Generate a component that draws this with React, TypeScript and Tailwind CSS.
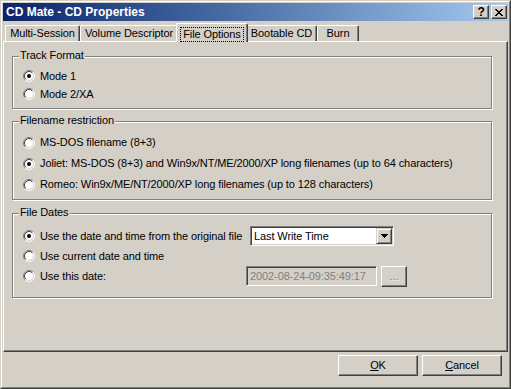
import React from "react";

function Radio({ checked }: { checked?: boolean }) {
  return (
    <svg width="12" height="12" viewBox="0 0 12 12" className="shrink-0">
      <circle cx="6" cy="6" r="5" fill="white" />
      <path d="M2.11 9.89 A5.5 5.5 0 0 1 9.89 2.11" fill="none" stroke="#808080" strokeWidth="1" />
      <path d="M9.89 2.11 A5.5 5.5 0 0 1 2.11 9.89" fill="none" stroke="#ffffff" strokeWidth="1" />
      <path d="M2.82 9.18 A4.5 4.5 0 0 1 9.18 2.82" fill="none" stroke="#404040" strokeWidth="1" />
      <path d="M9.18 2.82 A4.5 4.5 0 0 1 2.82 9.18" fill="none" stroke="#D4D0C8" strokeWidth="1" />
      {checked && <circle cx="6" cy="6" r="2" fill="black" />}
    </svg>
  );
}

function RadioRow({
  checked,
  label,
  h,
  labelW,
  children,
}: {
  checked?: boolean;
  label: string;
  h: string;
  labelW?: string;
  children?: React.ReactNode;
}) {
  return (
    <div className={`flex items-center ${h}`}>
      <Radio checked={checked} />
      <span className={`ml-[5px] whitespace-nowrap ${labelW ?? ""}`}>{label}</span>
      {children}
    </div>
  );
}

function Group({
  title,
  h,
  mt,
  pt,
  children,
}: {
  title: string;
  h: string;
  mt: string;
  pt: string;
  children: React.ReactNode;
}) {
  return (
    <div
      className={`relative ml-[8px] w-[480px] ${h} ${mt} ${pt} pl-[10px] border border-[#808080] shadow-[1px_1px_0_#ffffff,inset_1px_1px_0_#ffffff]`}
    >
      <span className="absolute left-[6px] -top-[8px] px-px bg-[#D4D0C8] leading-[13px]">{title}</span>
      {children}
    </div>
  );
}

function Tab({ label, w }: { label: string; w: string }) {
  return (
    <div
      className={`${w} h-[16px] flex items-center justify-center border-t border-l border-white border-r border-r-[#404040] rounded-tl-[2px] rounded-tr-[2px] shadow-[inset_-1px_0_0_#808080] leading-[13px] whitespace-nowrap`}
    >
      {label}
    </div>
  );
}

function Button({ children }: { children: React.ReactNode }) {
  return (
    <div className="w-[80px] h-[21px] flex items-center justify-center border border-t-white border-l-white border-r-[#404040] border-b-[#404040] shadow-[inset_-1px_-1px_0_#808080] leading-[13px]">
      {children}
    </div>
  );
}

export default function App() {
  return (
    <div className="w-[511px] h-[389px] bg-[#D4D0C8] text-[11px] tracking-[-0.1px] text-black font-['Liberation_Sans',Arial,sans-serif] border border-t-[#D4D0C8] border-l-[#D4D0C8] border-r-[#404040] border-b-[#404040] select-none">
      <div className="w-full h-full flex flex-col p-px border border-t-white border-l-white border-r-[#808080] border-b-[#808080]">
        {/* Title bar */}
        <div className="h-[18px] shrink-0 flex items-center pl-[3px] pr-[1px] bg-linear-to-r from-[#0A246A] to-[#A6CAF0]">
          <span className="text-white font-bold text-[12px] tracking-normal leading-[14px]">CD Mate - CD Properties</span>
          <div className="ml-auto flex gap-[2px]">
            <div className="w-[16px] h-[14px] flex items-center justify-center bg-[#D4D0C8] border border-t-white border-l-white border-r-[#404040] border-b-[#404040] shadow-[inset_-1px_-1px_0_#808080] font-bold text-[12px] leading-[11px]">
              ?
            </div>
            <div className="w-[16px] h-[14px] flex items-center justify-center bg-[#D4D0C8] border border-t-white border-l-white border-r-[#404040] border-b-[#404040] shadow-[inset_-1px_-1px_0_#808080]">
              <svg width="8" height="7" viewBox="0 0 8 7" shapeRendering="crispEdges">
                <path d="M0 0h2v1h-2zM6 0h2v1h-2zM1 1h2v1h-2zM5 1h2v1h-2zM2 2h4v1h-4zM3 3h2v1h-2zM2 4h4v1h-4zM1 5h2v1h-2zM5 5h2v1h-2zM0 6h2v1h-2zM6 6h2v1h-2z" fill="black" />
              </svg>
            </div>
          </div>
        </div>

        {/* Tabs */}
        <div className="h-[20px] shrink-0 flex items-end pl-[2px] relative z-10">
          <Tab label="Multi-Session" w="w-[75px]" />
          <Tab label="Volume Descriptor" w="w-[98px]" />
          <div className="w-[72px] h-[19px] -mx-[2px] -mb-px bg-[#D4D0C8] flex items-start justify-center pt-[3px] border-t border-l border-white border-r border-r-[#404040] rounded-tl-[2px] rounded-tr-[2px] shadow-[inset_-1px_0_0_#808080] relative z-10">
            <span className="px-[2px] border border-dotted border-black leading-[13px] whitespace-nowrap">File Options</span>
          </div>
          <Tab label="Bootable CD" w="w-[71px]" />
          <Tab label="Burn" w="w-[42px]" />
        </div>

        {/* Panel */}
        <div className="h-[311px] w-[505px] shrink-0 border border-t-white border-l-white border-r-[#404040] border-b-[#404040] shadow-[inset_-1px_-1px_0_#808080]">
          <Group title="Track Format" h="h-[53px]" mt="mt-[14px]" pt="pt-[10px]">
            <RadioRow checked label="Mode 1" h="h-[18px]" />
            <RadioRow label="Mode 2/XA" h="h-[18px]" />
          </Group>

          <Group title="Filename restriction" h="h-[79px]" mt="mt-[12px]" pt="pt-[10px]">
            <RadioRow label="MS-DOS filename (8+3)" h="h-[21px]" />
            <RadioRow
              checked
              label="Joliet: MS-DOS (8+3) and Win9x/NT/ME/2000/XP long filenames (up to 64 characters)"
              h="h-[21px]"
            />
            <RadioRow label="Romeo: Win9x/ME/NT/2000/XP long filenames (up to 128 characters)" h="h-[21px]" />
          </Group>

          <Group title="File Dates" h="h-[85px]" mt="mt-[13px]" pt="pt-[12px]">
            <RadioRow checked label="Use the date and time from the original file" h="h-[20px]" labelW="w-[210px]">
              <div className="w-[144px] h-[20px] flex items-center bg-white border border-t-[#808080] border-l-[#808080] border-r-white border-b-white shadow-[inset_1px_1px_0_#404040,inset_-1px_-1px_0_#D4D0C8]">
                <span className="ml-[3px] leading-[13px] whitespace-nowrap">Last Write Time</span>
                <div className="ml-auto mr-px w-[16px] h-[16px] flex items-center justify-center bg-[#D4D0C8] border border-t-[#D4D0C8] border-l-[#D4D0C8] border-r-[#404040] border-b-[#404040] shadow-[inset_1px_1px_0_#ffffff,inset_-1px_-1px_0_#808080]">
                  <svg width="7" height="4" viewBox="0 0 7 4" shapeRendering="crispEdges">
                    <path d="M0 0h7v1h-7zM1 1h5v1h-5zM2 2h3v1h-3zM3 3h1v1h-1z" fill="black" />
                  </svg>
                </div>
              </div>
            </RadioRow>
            <RadioRow label="Use current date and time" h="h-[20px]" />
            <RadioRow label="Use this date:" h="h-[20px]" labelW="w-[206px]">
              <div className="w-[131px] h-[20px] flex items-center bg-[#D4D0C8] border border-t-[#808080] border-l-[#808080] border-r-white border-b-white shadow-[inset_1px_1px_0_#404040,inset_-1px_-1px_0_#D4D0C8]">
                <span className="ml-[3px] text-[#808080] leading-[13px] whitespace-nowrap">2002-08-24-09:35:49:17</span>
              </div>
              <div className="ml-[4px] w-[26px] h-[21px] flex items-center justify-center border border-t-white border-l-white border-r-[#404040] border-b-[#404040] shadow-[inset_-1px_-1px_0_#808080] text-[#808080] [text-shadow:1px_1px_0_#ffffff] leading-[13px]">
                ...
              </div>
            </RadioRow>
          </Group>
        </div>

        {/* Buttons */}
        <div className="flex justify-end gap-[4px] pt-[3px] pr-[6px]">
          <Button>
            <span>
              <u>O</u>K
            </span>
          </Button>
          <Button>
            <span>
              <u>C</u>ancel
            </span>
          </Button>
        </div>
      </div>
    </div>
  );
}
